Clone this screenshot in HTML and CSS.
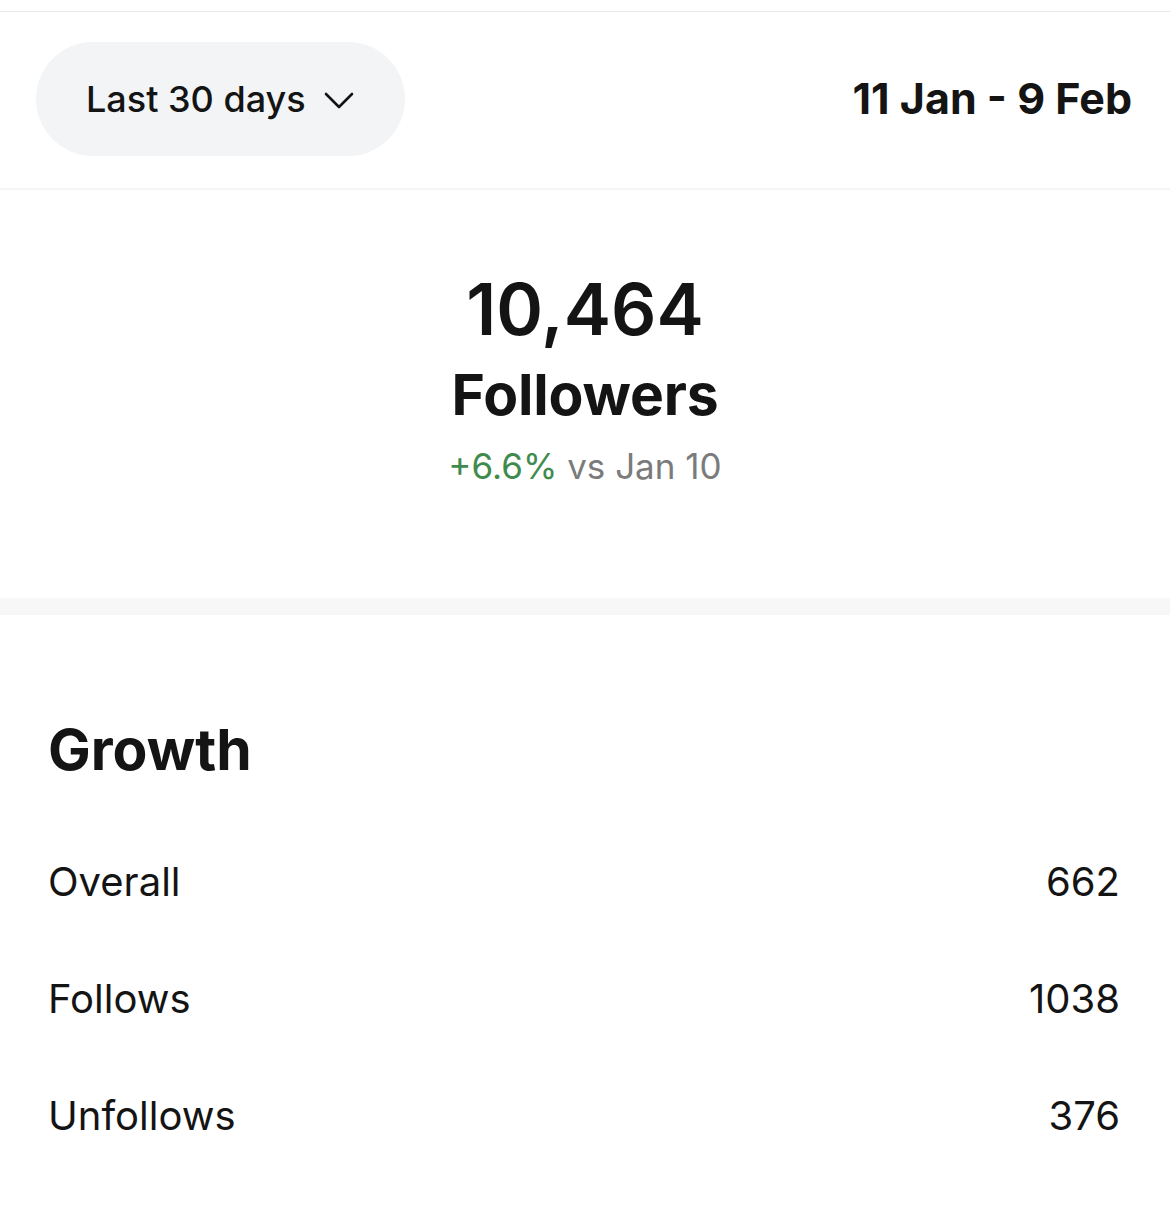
FILE: index.html
```html
<!DOCTYPE html>
<html lang="en">
<head>
    <meta charset="UTF-8">
    <meta name="viewport" content="width=device-width, initial-scale=1.0">
    <title>Followers</title>
    <link rel="stylesheet" href="styles.css">
</head>
<body>
    <div class="page">
        <div class="topBar">
            <button class="range">
                <span>Last 30 days</span>
                <svg class="chevron" width="30" height="17" viewBox="0 0 30 17">
                    <path d="M2 2 L15 15 L28 2" fill="none" stroke="#141414" stroke-width="2.6" stroke-linecap="round" stroke-linejoin="round"/>
                </svg>
            </button>
            <div class="dates">11 Jan - 9 Feb</div>
        </div>

        <div class="summary">
            <div class="total">10,464</div>
            <div class="label">Followers</div>
            <div class="change"><span class="up">+6.6%</span> vs Jan 10</div>
        </div>

        <div class="divider"></div>

        <div class="growth">
            <h2>Growth</h2>
            <div class="row"><span>Overall</span><span>662</span></div>
            <div class="row"><span>Follows</span><span>1038</span></div>
            <div class="row"><span>Unfollows</span><span>376</span></div>
        </div>
    </div>
</body>
</html>
```

FILE: styles.css
```css
* {
    margin: 0;
    padding: 0;
    box-sizing: border-box;
}

body {
    background: #ffffff;
    color: #141414;
    font-family: Inter, "Noto Sans", sans-serif;
}

.page {
    padding-top: 11px;
}

.topBar {
    height: 179px;
    border-top: 1px solid #e8e8e8;
    border-bottom: 2px solid #f5f5f5;
    display: flex;
    align-items: center;
    justify-content: space-between;
    padding: 0 38px 0 36px;
}

.range {
    width: 369px;
    height: 114px;
    margin-top: -2px;
    border: none;
    border-radius: 57px;
    background: #f2f4f5;
    display: flex;
    align-items: center;
    gap: 18px;
    padding-left: 50px;
    font-family: inherit;
    font-size: 36px;
    font-weight: 500;
    color: #141414;
}

.chevron {
    margin-top: 2px;
}

.dates {
    font-size: 43px;
    font-weight: 700;
    margin-top: -4px;
}

.summary {
    height: 408px;
    display: flex;
    flex-direction: column;
    align-items: center;
    padding-top: 76px;
}

.total {
    font-size: 71px;
    font-weight: 600;
    line-height: 86px;
}

.label {
    font-size: 57px;
    font-weight: 700;
    line-height: 72px;
    letter-spacing: -0.2px;
    margin-top: 7px;
}

.change {
    font-size: 35px;
    line-height: 46px;
    margin-top: 12px;
    color: #7b7b7b;
}

.up {
    color: #3f8b4e;
}

.divider {
    height: 17px;
    background: #f7f7f7;
}

.growth {
    padding: 100px 50px 0 48px;
}

.growth h2 {
    font-size: 57px;
    font-weight: 700;
    line-height: 70px;
    margin-bottom: 74px;
}

.row {
    display: flex;
    justify-content: space-between;
    font-size: 40px;
    line-height: 46px;
    margin-bottom: 71px;
}
```
